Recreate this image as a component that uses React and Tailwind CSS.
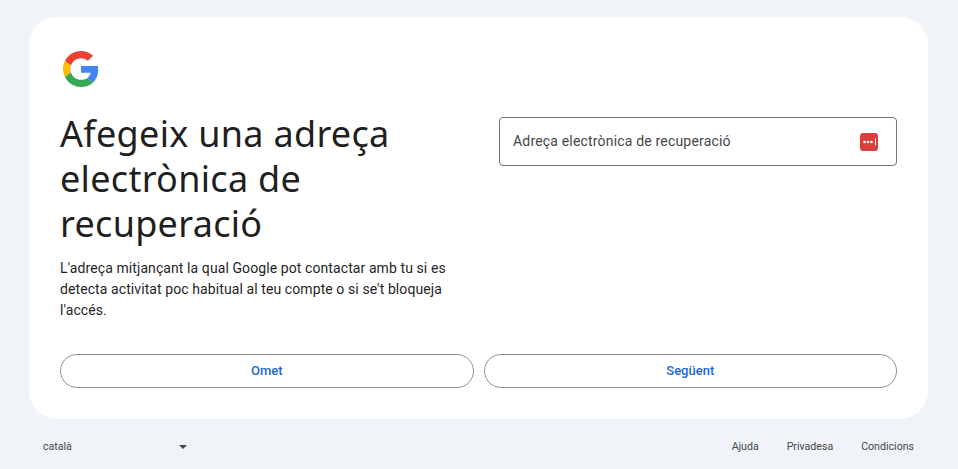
export default function App() {
  return (
    <div className="h-[469px] w-[958px] overflow-hidden bg-[#f0f4f9] font-['Roboto',sans-serif] pt-[17px]">
      {/* Card */}
      <div className="ml-[29px] h-[402px] w-[899px] rounded-[28px] bg-white px-[31px] pt-[34px]">
        <GoogleLogo />
        <div className="mt-[24px] flex">
          <div className="w-[390px]">
            <h1 className="font-['Noto_Sans',sans-serif] text-[36px] leading-[45px] tracking-[0.3px] text-[#1f1f1f]">
              Afegeix una adreça electrònica de recuperació
            </h1>
            <p className="mt-[12px] text-[14px] leading-[21px] tracking-[0.09px] text-[#1f1f1f]">
              L'adreça mitjançant la qual Google pot contactar amb tu si es detecta activitat poc habitual al teu compte o si se't bloqueja l'accés.
            </p>
          </div>
          <div className="ml-[49px] flex-1 pt-[6px]">
            <div className="flex h-[49px] items-center justify-between rounded-[4px] border border-[#747775] pl-[13px] pr-[18px]">
              <span className="text-[14px] tracking-[0.18px] text-[#444746]">Adreça electrònica de recuperació</span>
              <PasswordIcon />
            </div>
          </div>
        </div>

        {/* Buttons */}
        <div className="mt-[33px] flex gap-[10px]">
          <button className="h-[34px] flex-1 rounded-full border border-[#8e918f] text-[13px] font-medium text-[#1a66d8]">Omet</button>
          <button className="h-[34px] flex-1 rounded-full border border-[#8e918f] text-[13px] font-medium text-[#1a66d8]">Següent</button>
        </div>
      </div>

      {/* Footer */}
      <div className="flex h-[50px] items-center justify-between pl-[43px] pr-[44px] pt-[6px] text-[10.6px] text-[#444746]">
        <div className="flex w-[144px] items-center justify-between">
          <span>català</span>
          <span className="h-0 w-0 border-x-[4px] border-t-[4px] border-x-transparent border-t-[#444746]" />
        </div>
        <div className="flex gap-[28px]">
          <span>Ajuda</span>
          <span>Privadesa</span>
          <span>Condicions</span>
        </div>
      </div>
    </div>
  );
}

function GoogleLogo() {
  return (
    <svg viewBox="0 0 48 48" className="ml-[3px] h-[36px] w-[36px]">
      <path fill="#EA4335" d="M24 9.5c3.54 0 6.71 1.22 9.21 3.6l6.85-6.85C35.9 2.38 30.47 0 24 0 14.62 0 6.51 5.38 2.56 13.22l7.98 6.19C12.43 13.72 17.74 9.5 24 9.5z" />
      <path fill="#4285F4" d="M46.98 24.55c0-1.57-.15-3.09-.38-4.55H24v9.02h12.94c-.58 2.96-2.26 5.48-4.78 7.18l7.73 6c4.51-4.18 7.09-10.36 7.09-17.65z" />
      <path fill="#FBBC05" d="M10.53 28.59c-.48-1.45-.76-2.99-.76-4.59s.27-3.14.76-4.59l-7.98-6.19C.92 16.46 0 20.12 0 24c0 3.88.92 7.54 2.56 10.78l7.97-6.19z" />
      <path fill="#34A853" d="M24 48c6.48 0 11.93-2.13 15.89-5.81l-7.73-6c-2.15 1.45-4.92 2.3-8.16 2.3-6.26 0-11.57-4.22-13.47-9.91l-7.98 6.19C6.51 42.62 14.62 48 24 48z" />
    </svg>
  );
}

function PasswordIcon() {
  return (
    <svg viewBox="0 0 18 18" className="h-[18px] w-[18px]">
      <rect width="18" height="18" rx="3" fill="#dc3e3e" />
      <circle cx="4.5" cy="9" r="1.3" fill="#fff" />
      <circle cx="8" cy="9" r="1.3" fill="#fff" />
      <circle cx="11.5" cy="9" r="1.3" fill="#fff" />
      <rect x="15" y="5.5" width="1" height="7" fill="#fff" />
    </svg>
  );
}
